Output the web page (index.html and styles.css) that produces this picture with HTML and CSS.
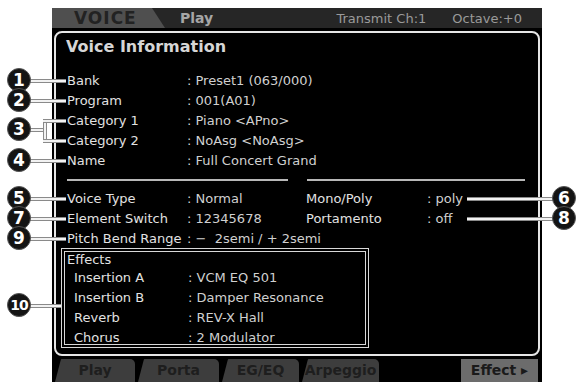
FILE: index.html
```html
<!DOCTYPE html>
<html lang="en">
<head>
    <meta charset="UTF-8">
    <meta name="viewport" content="width=device-width, initial-scale=1.0">
    <title>Voice Information</title>
    <link rel="stylesheet" href="styles.css">
</head>
<body>

<div class="screen">
    <div class="topbar">
        <div class="tab-main">VOICE</div>
        <div class="mode">Play</div>
        <div class="status">
            <span>Transmit Ch:1</span>
            <span>Octave:+0</span>
        </div>
    </div>

    <div class="panel">
        <h2 class="title">Voice Information</h2>

        <div class="info">
            <span>Bank</span><span class="val">: Preset1 (063/000)</span>
            <span>Program</span><span class="val">: 001(A01)</span>
            <span>Category 1</span><span class="val">: Piano &lt;APno&gt;</span>
            <span>Category 2</span><span class="val">: NoAsg &lt;NoAsg&gt;</span>
            <span>Name</span><span class="val">: Full Concert Grand</span>
        </div>

        <div class="sep">
            <div class="sep-line left"></div>
            <div class="sep-line right"></div>
        </div>

        <div class="lower">
            <span>Voice Type</span><span class="val">: Normal</span>
            <span>Mono/Poly</span><span class="val">: poly</span>
            <span>Element Switch</span><span class="val">: 12345678</span>
            <span>Portamento</span><span class="val">: off</span>
            <span>Pitch Bend Range</span><span class="val wide">: &minus;&nbsp; 2semi / + 2semi</span>
        </div>

        <div class="effects">
            <div class="effects-title">Effects</div>
            <div class="effects-list">
                <span>Insertion A</span><span class="val">: VCM EQ 501</span>
                <span>Insertion B</span><span class="val">: Damper Resonance</span>
                <span>Reverb</span><span class="val">: REV-X Hall</span>
                <span>Chorus</span><span class="val">: 2 Modulator</span>
            </div>
        </div>
    </div>

    <div class="tabs">
        <div class="tab t-play">Play</div>
        <div class="tab t-porta">Porta</div>
        <div class="tab t-eg">EG/EQ</div>
        <div class="tab t-arp">Arpeggio</div>
        <div class="tab t-effect">Effect &#9656;</div>
    </div>
</div>

<!-- callout annotations drawn over the screen -->
<div class="callouts">
    <div class="lead" style="left:30px; top:79px; width:36px"></div>
    <div class="num" style="left:7px; top:68px">1</div>

    <div class="lead" style="left:30px; top:99px; width:36px"></div>
    <div class="num" style="left:7px; top:88px">2</div>

    <div class="lead" style="left:30px; top:128px; width:16px"></div>
    <div class="lead-v" style="left:43px; top:119px; height:23px"></div>
    <div class="lead" style="left:43px; top:119px; width:23px"></div>
    <div class="lead" style="left:43px; top:139px; width:23px"></div>
    <div class="num" style="left:7px; top:117px">3</div>

    <div class="lead" style="left:30px; top:159px; width:36px"></div>
    <div class="num" style="left:7px; top:148px">4</div>

    <div class="lead" style="left:30px; top:197px; width:36px"></div>
    <div class="num" style="left:7px; top:186px">5</div>

    <div class="lead" style="left:30px; top:217px; width:36px"></div>
    <div class="num" style="left:7px; top:206px">7</div>

    <div class="lead" style="left:30px; top:237px; width:36px"></div>
    <div class="num" style="left:7px; top:226px">9</div>

    <div class="lead" style="left:30px; top:304px; width:31px"></div>
    <div class="num small" style="left:7px; top:293px">10</div>

    <div class="lead" style="left:467px; top:197px; width:90px"></div>
    <div class="num" style="left:552px; top:186px">6</div>

    <div class="lead" style="left:467px; top:217px; width:90px"></div>
    <div class="num" style="left:552px; top:206px">8</div>
</div>

</body>
</html>
```

FILE: styles.css
```css
body {
    margin: 0;
    width: 584px;
    height: 382px;
    background: #fff;
    font-family: "DejaVu Sans", sans-serif;
    position: relative;
    overflow: hidden;
}
.screen {
    margin: 8px 0 0 52px;
    width: 490px;
    height: 374px;
    background: #000;
    display: flex;
    flex-direction: column;
}
.topbar {
    height: 20px;
    background: #262626;
    display: flex;
    align-items: center;
    flex-shrink: 0;
}
.tab-main {
    width: 113px;
    height: 20px;
    box-sizing: border-box;
    padding-left: 22px;
    background: #4f4f4f;
    clip-path: polygon(0 0, 100px 0, 113px 100%, 0 100%);
    color: #222;
    font-weight: bold;
    font-size: 17px;
    line-height: 20px;
    letter-spacing: 1px;
}
.mode {
    margin-left: 15px;
    color: #a6a6a6;
    font-weight: bold;
    font-size: 14px;
}
.status {
    margin-left: auto;
    padding-right: 20px;
    display: flex;
    gap: 26px;
    color: #9a9a9a;
    font-size: 13px;
}
.panel {
    margin: 3px 2px 0;
    height: 325px;
    flex-shrink: 0;
    box-sizing: border-box;
    border: 2px solid #e6e6e6;
    border-radius: 8px;
    padding: 4px 0 0 11px;
    overflow: hidden;
    color: #e2e2e2;
    font-size: 13px;
}
.title {
    margin: 0 0 0 -1px;
    font-size: 16px;
    line-height: 20px;
    color: #d6d6d6;
}
.val {
    color: #d0d0d0;
    white-space: nowrap;
}
.info {
    margin-top: 14px;
    display: grid;
    grid-template-columns: 120px auto;
    line-height: 20px;
}
.sep {
    margin: 8px 0;
    display: flex;
    gap: 19px;
}
.sep-line {
    height: 2px;
    background: #b8b8b8;
}
.sep-line.left {
    width: 221px;
}
.sep-line.right {
    width: 218px;
}
.lower {
    display: grid;
    grid-template-columns: 120px 119px 121px auto;
    line-height: 20px;
}
.lower .wide {
    grid-column: 2 / span 3;
}
.effects {
    margin: -1px 0 0 -6px;
    width: 308px;
    height: 100px;
    box-sizing: border-box;
    border: 4px double #d8d8d8;
    padding-left: 2px;
    overflow: hidden;
}
.effects-title {
    line-height: 16px;
}
.effects-list {
    display: grid;
    grid-template-columns: 114px auto;
    padding-left: 7px;
    line-height: 20px;
}
.tabs {
    margin-top: 3px;
    height: 23px;
    display: flex;
    gap: 3px;
    padding-left: 3px;
}
.tab {
    height: 23px;
    box-sizing: border-box;
    background: #3d3d3d;
    border-radius: 7px 5px 0 0;
    clip-path: polygon(6px 0, 100% 0, 100% 100%, 0 100%);
    color: #1e1e1e;
    font-weight: bold;
    font-size: 14px;
    line-height: 22px;
    text-align: center;
}
.t-play {
    width: 80px;
}
.t-porta {
    width: 81px;
}
.t-eg {
    width: 77px;
}
.t-arp {
    width: 77px;
}
.t-effect {
    width: 77px;
    margin-left: auto;
    margin-right: 4px;
    background: #6c6c6c;
    border-radius: 0;
    clip-path: none;
    color: #1a1a1a;
}
.callouts .lead {
    position: absolute;
    height: 2px;
    background: #f2f2f2;
    border-top: 1px solid #8a8a8a;
    border-bottom: 1px solid #8a8a8a;
}
.callouts .lead-v {
    position: absolute;
    width: 2px;
    background: #f2f2f2;
    border-left: 1px solid #8a8a8a;
    border-right: 1px solid #8a8a8a;
}
.callouts .num {
    position: absolute;
    width: 24px;
    height: 24px;
    border-radius: 50%;
    background: #141414;
    border: 1px solid #555;
    box-sizing: border-box;
    color: #fff;
    font-weight: bold;
    font-size: 17px;
    line-height: 22px;
    text-align: center;
}
.callouts .num.small {
    font-size: 14px;
    letter-spacing: -1px;
}
```
